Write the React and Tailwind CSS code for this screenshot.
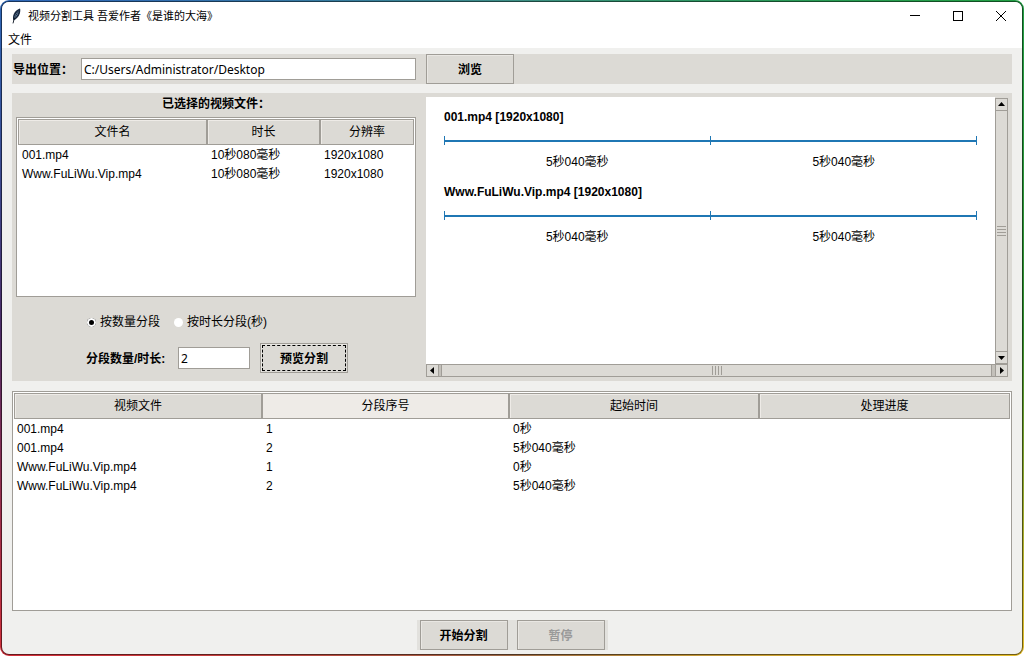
import React, { useState } from 'react';

const files = [
  { name: '001.mp4', duration: 10080, size: '1920x1080' },
  { name: 'Www.FuLiWu.Vip.mp4', duration: 10080, size: '1920x1080' },
];

const formatTime = (ms) => {
  const s = Math.floor(ms / 1000);
  const rest = ms % 1000;
  return rest ? `${s}秒${String(rest).padStart(3, '0')}毫秒` : `${s}秒`;
};

const splitFile = (file, mode, value) => {
  const n = Math.max(1, Number(value) || 1);
  const step = mode === 'count' ? Math.round(file.duration / n) : n * 1000;
  const parts = [];
  for (let start = 0; start < file.duration; start += step) {
    parts.push({ start, length: Math.min(step, file.duration - start) });
  }
  return parts;
};

const Button = ({ children, className = '', ...props }) => (
  <button
    className={`h-[30px] w-[88px] shrink-0 border border-[#a09d97] bg-[#dcdad5] pt-0.5 font-bold shadow-[inset_1px_1px_0_#e9e7e3] disabled:text-[#999999] ${className}`}
    {...props}
  >
    {children}
  </button>
);

const Th = ({ children, className = '' }) => (
  <th
    className={`h-[26px] border border-[#a09d97] font-normal shadow-[inset_1px_1px_0_#eeebe7] ${className}`}
  >
    {children}
  </th>
);

const arrows = {
  up: 'M5.5 3 L9 7 H2 Z',
  down: 'M5.5 8 L9 4 H2 Z',
  left: 'M3 5.5 L7 2 V9 Z',
  right: 'M8 5.5 L4 2 V9 Z',
};

const ArrowButton = ({ dir, label }) => (
  <button
    aria-label={label}
    className="flex size-[13px] shrink-0 items-center justify-center border border-[#a09d97] bg-[#dcdad5]"
  >
    <svg viewBox="0 0 11 11" className="size-[11px] shrink-0">
      <path d={arrows[dir]} fill="#000" />
    </svg>
  </button>
);

const Feather = () => (
  <svg viewBox="0 0 16 16" className="size-4">
    <path d="M12 0.6 C8.6 1.6 5.4 5 5 9 C4.9 10.4 5 11.4 5.4 12.4 C8.8 11.2 10.8 8.6 11.8 5.6 C12.4 3.6 12.4 1.8 12 0.6 Z" fill="#16263c" />
    <path d="M11 2.4 C8.4 4.4 6.6 7.4 6 10.6 C8.4 8.8 10.2 5.8 11 2.4 Z" fill="#8fb4dc" />
    <path d="M10.6 3.4 C8 6.6 6 10.4 5 15.4" fill="none" stroke="#0b1420" strokeWidth="0.9" />
  </svg>
);

export default function App() {
  const [path, setPath] = useState('C:/Users/Administrator/Desktop');
  const [mode, setMode] = useState('count');
  const [value, setValue] = useState('2');
  const [preview, setPreview] = useState(files.map((f) => splitFile(f, 'count', 2)));

  const handlePreview = () => setPreview(files.map((f) => splitFile(f, mode, value)));

  return (
    <div className="flex min-h-screen flex-col rounded-[9px] bg-[conic-gradient(#3d8f86_0deg,#22a045_57deg,#2f8a2c_90deg,#e5bd2a_123deg,#9c6a45_180deg,#d3303a_237deg,#4a2b66_270deg,#2f68b8_303deg,#3d8f86_360deg)] p-px font-['Liberation_Sans','Noto_Sans_CJK_SC',sans-serif] text-xs text-black">
      <div className="flex grow flex-col rounded-lg bg-black/50 p-px">
        <div className="flex grow flex-col overflow-hidden rounded-[7px] bg-[#f0f0ee]">

          {/* Title bar */}
          <header className="flex h-7 items-center bg-white pl-1.5">
            <Feather />
            <h1 className="ml-1 grow text-[11px]">视频分割工具 吾爱作者《是谁的大海》</h1>
            <button aria-label="最小化" className="flex h-7 w-[43px] items-center justify-center">
              <svg viewBox="0 0 10 10" className="size-2.5"><path d="M0 4.5 H10" stroke="#000" /></svg>
            </button>
            <button aria-label="最大化" className="flex h-7 w-[43px] items-center justify-center">
              <svg viewBox="0 0 10 10" className="size-2.5"><rect x="0.5" y="0.5" width="9" height="9" fill="none" stroke="#000" /></svg>
            </button>
            <button aria-label="关闭" className="flex h-7 w-[43px] items-center justify-center">
              <svg viewBox="0 0 10 10" className="size-2.5"><path d="M0 0 L10 10 M10 0 L0 10" stroke="#000" /></svg>
            </button>
          </header>

          {/* Menu */}
          <nav className="flex h-[18px] items-center bg-white pl-1.5">
            <button className="pt-0.5">文件</button>
          </nav>

          <main className="flex grow flex-col px-2.5 pt-1.5 pb-1">
            {/* Export path */}
            <section className="flex h-[30px] items-center gap-2.5 bg-[#dcdad5]">
              <div className="flex w-[404px] items-center pl-px">
                <label htmlFor="path" className="w-[68px] pt-0.5 font-bold">导出位置：</label>
                <input
                  id="path"
                  type="text"
                  value={path}
                  onChange={(e) => setPath(e.target.value)}
                  className="h-[22px] min-w-0 grow border border-[#a09d97] bg-white px-0.5 font-['Noto_Sans','Noto_Sans_CJK_SC',sans-serif] outline-none"
                />
              </div>
              <Button>浏览</Button>
            </section>

            <section className="mt-[9px] flex gap-2.5 bg-[#dcdad5] p-1">
              {/* Selected files */}
              <div className="flex w-[400px] shrink-0 flex-col pb-1">
                <h2 className="h-5 text-center leading-[14px] font-bold">已选择的视频文件：</h2>
                <div className="h-[180px] border border-[#a09d97] bg-white p-px">
                  <table className="w-full table-fixed border-separate border-spacing-0">
                    <thead className="bg-[#dcdad5]">
                      <tr>
                        <Th className="w-[189px]">文件名</Th>
                        <Th className="w-[113px]">时长</Th>
                        <Th>分辨率</Th>
                      </tr>
                    </thead>
                    <tbody>
                      {files.map((f) => (
                        <tr key={f.name} className="h-[19px]">
                          <td className="pl-1">{f.name}</td>
                          <td className="pl-1">{formatTime(f.duration)}</td>
                          <td className="pl-1">{f.size}</td>
                        </tr>
                      ))}
                    </tbody>
                  </table>
                </div>

                <div className="mt-4 flex h-[18px] items-center gap-3.5 pl-[71px]">
                  <label className="flex items-center gap-1">
                    <input
                      type="radio"
                      name="mode"
                      checked={mode === 'count'}
                      onChange={() => setMode('count')}
                      className="size-[9px] appearance-none rounded-full bg-white checked:bg-black checked:shadow-[inset_0_0_0_2px_#fff]"
                    />
                    按数量分段
                  </label>
                  <label className="flex items-center gap-1">
                    <input
                      type="radio"
                      name="mode"
                      checked={mode === 'time'}
                      onChange={() => setMode('time')}
                      className="size-[9px] appearance-none rounded-full bg-white checked:bg-black checked:shadow-[inset_0_0_0_2px_#fff]"
                    />
                    按时长分段(秒)
                  </label>
                </div>

                <div className="mt-3 flex items-center pl-[70px]">
                  <label htmlFor="value" className="w-[92px] pt-0.5 font-bold">分段数量/时长:</label>
                  <input
                    id="value"
                    type="text"
                    value={value}
                    onChange={(e) => setValue(e.target.value)}
                    className="mr-2.5 h-[22px] w-[72px] border border-[#a09d97] bg-white px-0.5 font-['Noto_Sans','Noto_Sans_CJK_SC',sans-serif] outline-none"
                  />
                  <Button
                    onClick={handlePreview}
                    className="outline-1 -outline-offset-3 outline-dashed outline-black"
                  >
                    预览分割
                  </Button>
                </div>
              </div>

              {/* Timeline preview */}
              <div className="flex min-w-0 grow flex-col">
                <div className="flex grow">
                  <div className="flex grow flex-col gap-3.5 bg-white px-[18px] pt-3">
                    {files.map((f, i) => (
                      <div key={f.name}>
                        <h3 className="leading-4 font-bold">{f.name} [{f.size}]</h3>
                        <div className="mt-[11px] flex h-[9px] items-center">
                          <span className="h-full w-px bg-[#1f77b4]" />
                          {preview[i].map((p) => (
                            <React.Fragment key={p.start}>
                              <span className="h-0.5 grow bg-[#1f77b4]" />
                              <span className="h-full w-px bg-[#1f77b4]" />
                            </React.Fragment>
                          ))}
                        </div>
                        <div className="mt-[9px] flex text-center leading-4">
                          {preview[i].map((p) => (
                            <span key={p.start} className="flex-1">{formatTime(p.length)}</span>
                          ))}
                        </div>
                      </div>
                    ))}
                  </div>
                  <div className="flex w-[13px] flex-col pt-px">
                    <ArrowButton dir="up" label="向上滚动" />
                    <div className="flex grow flex-col items-center justify-center gap-0.5 border-x border-[#a09d97]">
                      <span className="h-px w-[9px] bg-[#a09d97]" />
                      <span className="h-px w-[9px] bg-[#a09d97]" />
                      <span className="h-px w-[9px] bg-[#a09d97]" />
                      <span className="h-px w-[9px] bg-[#a09d97]" />
                    </div>
                    <ArrowButton dir="down" label="向下滚动" />
                  </div>
                </div>
                <div className="flex">
                  <ArrowButton dir="left" label="向左滚动" />
                  <div className="flex grow border-y border-[#a09d97] bg-[#c3c0ba] pr-[3px] pl-0.5">
                    <div className="flex grow items-center justify-center gap-0.5 border-x border-[#a09d97] bg-[#dcdad5]">
                      <span className="h-[9px] w-px bg-[#a09d97]" />
                      <span className="h-[9px] w-px bg-[#a09d97]" />
                      <span className="h-[9px] w-px bg-[#a09d97]" />
                      <span className="h-[9px] w-px bg-[#a09d97]" />
                    </div>
                  </div>
                  <ArrowButton dir="right" label="向右滚动" />
                </div>
              </div>
            </section>

            {/* Segments */}
            <section className="mt-2.5 grow border border-[#a09d97] bg-white p-px">
              <table className="w-full table-fixed border-separate border-spacing-0">
                <thead className="bg-[#dcdad5]">
                  <tr>
                    <Th className="w-[248px]">视频文件</Th>
                    <Th className="w-[247px] bg-[#eeebe7]">分段序号</Th>
                    <Th className="w-[250px]">起始时间</Th>
                    <Th>处理进度</Th>
                  </tr>
                </thead>
                <tbody>
                  {files.map((f, i) =>
                    preview[i].map((p, j) => (
                      <tr key={f.name + j} className="h-[19px]">
                        <td className="pl-[3px]">{f.name}</td>
                        <td className="pl-1">{j + 1}</td>
                        <td className="pl-1">{formatTime(p.start)}</td>
                        <td></td>
                      </tr>
                    ))
                  )}
                </tbody>
              </table>
            </section>

            <footer className="mt-[9px] flex justify-center">
              <div className="flex gap-[9px] bg-[#e2e1dd] px-[3px]">
                <Button>开始分割</Button>
                <Button disabled>暂停</Button>
              </div>
            </footer>
          </main>
        </div>
      </div>
    </div>
  );
}
